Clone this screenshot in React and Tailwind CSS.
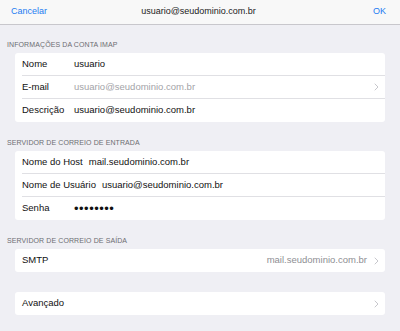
function Chevron() {
  return (
    <svg className="h-[8px] w-[5px] shrink-0" viewBox="0 0 5 8" fill="none">
      <path d="M1 1l3 3-3 3" stroke="#c7c7cc" strokeWidth="1" strokeLinecap="round" strokeLinejoin="round" />
    </svg>
  );
}

function Row({ label, value, muted, chevron, last, right, secret }) {
  return (
    <div className="flex h-[23px] items-center pl-[7px]">
      <div className={`flex h-full flex-1 items-center pr-[6px] ${last ? "" : "border-b border-[#e0e0e4]"}`}>
        <span className="min-w-[52px] pr-[6px] text-[#111]">{label}</span>
        {right ? (
          <span className="ml-auto mr-[7px] text-[#8e8e93]">{value}</span>
        ) : secret ? (
          <span className="flex-1 text-[13px] leading-none tracking-[0.5px] text-[#111]">{value}</span>
        ) : (
          <span className={`flex-1 ${muted ? "text-[#a3a3a8]" : "text-[#111]"}`}>{value}</span>
        )}
        {chevron && <Chevron />}
      </div>
    </div>
  );
}

function Section({ title, children, className = "" }) {
  return (
    <div className={className}>
      {title && (
        <p className="px-[7px] pb-[4px] text-[7px] leading-[8px] uppercase tracking-[0.1px] text-[#6d6d72]">{title}</p>
      )}
      <div className="mx-[15px] overflow-hidden rounded-[3px] bg-white">{children}</div>
    </div>
  );
}

export default function App() {
  return (
    <div
      className="h-[331px] w-[400px] overflow-hidden bg-[#efeff4] text-[9.5px]"
      style={{ fontFamily: '"Liberation Sans", Arial, sans-serif' }}
    >
      {/* Nav bar */}
      <div className="grid h-[25px] grid-cols-[1fr_auto_1fr] items-center border-b border-[#c8c7cc] bg-[#f8f8f8] pl-[11px] pr-[14px] text-[9px]">
        <span className="text-[#1d7cf2]">Cancelar</span>
        <span className="text-[#222]">usuario@seudominio.com.br</span>
        <span className="justify-self-end text-[#1d7cf2]">OK</span>
      </div>

      <Section title="Informações da conta IMAP" className="pt-[16px]">
        <Row label="Nome" value="usuario" />
        <Row label="E-mail" value="usuario@seudominio.com.br" muted chevron />
        <Row label="Descrição" value="usuario@seudominio.com.br" last />
      </Section>

      <Section title="Servidor de correio de entrada" className="pt-[17px]">
        <Row label="Nome do Host" value="mail.seudominio.com.br" />
        <Row label="Nome de Usuário" value="usuario@seudominio.com.br" />
        <Row label="Senha" value="••••••••" secret last />
      </Section>

      <Section title="Servidor de correio de saída" className="pt-[17px]">
        <Row label="SMTP" value="mail.seudominio.com.br" right chevron last />
      </Section>

      <Section className="pt-[20px]">
        <Row label="Avançado" chevron last />
      </Section>
    </div>
  );
}
